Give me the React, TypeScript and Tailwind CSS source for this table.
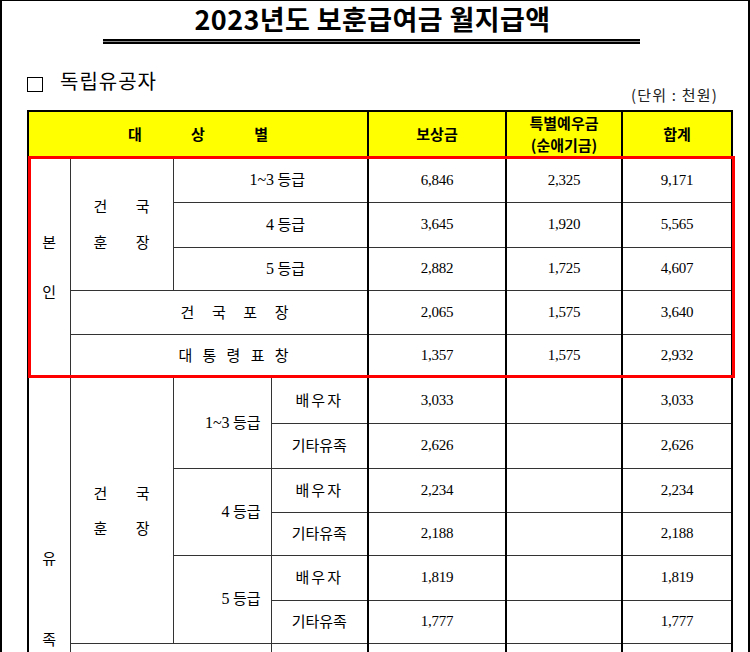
import React from 'react';

const KR = "font-['Noto_Sans_CJK_KR',sans-serif]";
const NUM = "font-['Liberation_Serif','Times_New_Roman',serif]";

// thin inner rule, thick black rule between the money columns
const cell = 'border border-[#333] p-0 align-middle';
const moneyCell = `${cell} border-l-2 border-l-black ${NUM} text-[15px] text-center tracking-[-0.3px]`;

type Amount = { pay: string; extra?: string; total: string };

function Amounts({ pay, extra = '', total }: Amount) {
  return (
    <>
      <td className={moneyCell}>{pay}</td>
      <td className={moneyCell}>{extra}</td>
      <td className={moneyCell}>{total}</td>
    </>
  );
}

// "1~3 등급" — digits set in the serif face like the amounts
function Grade({ n }: { n: string }) {
  return (
    <>
      <span className={`${NUM} text-[16px]`}>{n}</span> 등급
    </>
  );
}

// two-line "건 국 / 훈 장" label
function Hunjang({ gap }: { gap: string }) {
  return (
    <div className={`mx-auto flex w-[56px] flex-col ${gap}`}>
      <div className="flex justify-between leading-[20px]">
        <span>건</span>
        <span>국</span>
      </div>
      <div className="flex justify-between leading-[20px]">
        <span>훈</span>
        <span>장</span>
      </div>
    </div>
  );
}

function Spread({ text, ml, w }: { text: string; ml: string; w: string }) {
  return (
    <div className={`${ml} ${w} flex justify-between`}>
      {text.split('').map((c, i) => (
        <span key={i}>{c}</span>
      ))}
    </div>
  );
}

export default function App() {
  return (
    <div className={`min-h-screen w-[750px] border-t border-l-2 border-r-2 border-black bg-white text-black ${KR}`}>
      {/* title */}
      <h1 className="pr-[5px] pt-[1px] text-center text-[27px] font-bold leading-[34px] tracking-[0.4px]">
        2023년도 보훈급여금 월지급액
      </h1>
      <div className="ml-[101px] mt-[3px] h-[5px] w-[537px] border-t-2 border-b-2 border-black bg-[#8a8a8a]" />

      {/* section heading + unit */}
      <div className="ml-[25px] mt-[23px] flex w-[704px] items-start justify-between pr-[13px]">
        <div className="flex items-start">
          <span className="mt-[10px] h-[15px] w-[16px] border border-black" />
          <span className="ml-[17px] text-[20px] leading-[28px] tracking-[1px]">독립유공자</span>
        </div>
        <span className="mt-[18px] text-[15px] leading-[20px] tracking-[1.2px] text-[#222]">(단위 : 천원)</span>
      </div>

      {/* table */}
      <div className="relative ml-[25px] mt-[5px] w-[704px]">
        <table className="w-[704px] table-fixed border-collapse border-2 border-black text-[15px]">
          <colgroup>
            <col className="w-[42px]" />
            <col className="w-[103px]" />
            <col className="w-[98px]" />
            <col className="w-[97px]" />
            <col className="w-[138px]" />
            <col className="w-[116px]" />
            <col className="w-[110px]" />
          </colgroup>
          <thead>
            <tr className="h-[45px] bg-[#ffff00] text-[15px] font-bold">
              <th colSpan={4} className="border-2 border-black p-0">
                <div className="mx-auto flex w-[140px] justify-between">
                  <span>대</span>
                  <span>상</span>
                  <span>별</span>
                </div>
              </th>
              <th className="border-2 border-black p-0">보상금</th>
              <th className="border-2 border-black p-0 leading-[22px]">
                특별예우금
                <br />
                (순애기금)
              </th>
              <th className="border-2 border-black p-0">합계</th>
            </tr>
          </thead>
          <tbody>
            {/* 본인 */}
            <tr className="h-[45px]">
              <td rowSpan={5} className={`${cell} text-center`}>
                <div className="flex flex-col items-center gap-[30px] leading-[20px]">
                  <span>본</span>
                  <span>인</span>
                </div>
              </td>
              <td rowSpan={3} className={cell}>
                <Hunjang gap="gap-[16px]" />
              </td>
              <td colSpan={2} className={`${cell} pr-[62px] text-right`}>
                <Grade n="1~3" />
              </td>
              <Amounts pay="6,846" extra="2,325" total="9,171" />
            </tr>
            <tr className="h-[45px]">
              <td colSpan={2} className={`${cell} pr-[62px] text-right`}>
                <Grade n="4" />
              </td>
              <Amounts pay="3,645" extra="1,920" total="5,565" />
            </tr>
            <tr className="h-[43px]">
              <td colSpan={2} className={`${cell} pr-[62px] text-right`}>
                <Grade n="5" />
              </td>
              <Amounts pay="2,882" extra="1,725" total="4,607" />
            </tr>
            <tr className="h-[44px]">
              <td colSpan={3} className={cell}>
                <Spread text="건국포장" ml="ml-[110px]" w="w-[108px]" />
              </td>
              <Amounts pay="2,065" extra="1,575" total="3,640" />
            </tr>
            <tr className="h-[43px]">
              <td colSpan={3} className={cell}>
                <Spread text="대통령표창" ml="ml-[108px]" w="w-[110px]" />
              </td>
              <Amounts pay="1,357" extra="1,575" total="2,932" />
            </tr>

            {/* 유족 */}
            <tr className="h-[46px]">
              <td rowSpan={8} className={`${cell} align-top`}>
                <div className="flex flex-col items-center gap-[61px] pt-[170px] leading-[20px]">
                  <span>유</span>
                  <span>족</span>
                </div>
              </td>
              <td rowSpan={6} className={cell}>
                <Hunjang gap="gap-[15px]" />
              </td>
              <td rowSpan={2} className={`${cell} pr-[10px] text-right`}>
                <Grade n="1~3" />
              </td>
              <td className={`${cell} text-center tracking-[2px]`}>배우자</td>
              <Amounts pay="3,033" total="3,033" />
            </tr>
            <tr className="h-[45px]">
              <td className={`${cell} text-center`}>기타유족</td>
              <Amounts pay="2,626" total="2,626" />
            </tr>
            <tr className="h-[44px]">
              <td rowSpan={2} className={`${cell} pr-[10px] text-right`}>
                <Grade n="4" />
              </td>
              <td className={`${cell} text-center tracking-[2px]`}>배우자</td>
              <Amounts pay="2,234" total="2,234" />
            </tr>
            <tr className="h-[43px]">
              <td className={`${cell} text-center`}>기타유족</td>
              <Amounts pay="2,188" total="2,188" />
            </tr>
            <tr className="h-[45px]">
              <td rowSpan={2} className={`${cell} pr-[10px] text-right`}>
                <Grade n="5" />
              </td>
              <td className={`${cell} text-center tracking-[2px]`}>배우자</td>
              <Amounts pay="1,819" total="1,819" />
            </tr>
            <tr className="h-[43px]">
              <td className={`${cell} text-center`}>기타유족</td>
              <Amounts pay="1,777" total="1,777" />
            </tr>
            {/* next block starts right at the bottom edge, only its rules show */}
            <tr className="h-[44px]">
              <td colSpan={2} rowSpan={2} className={cell} />
              <td className={cell} />
              <Amounts pay="" total="" />
            </tr>
            <tr className="h-[44px]">
              <td className={cell} />
              <Amounts pay="" total="" />
            </tr>
          </tbody>
        </table>

        {/* red highlight round the 본인 block */}
        <div className="pointer-events-none absolute left-[1px] top-[46px] h-[222px] w-[707px] border-[3px] border-[#ff0000]" />
      </div>
    </div>
  );
}
